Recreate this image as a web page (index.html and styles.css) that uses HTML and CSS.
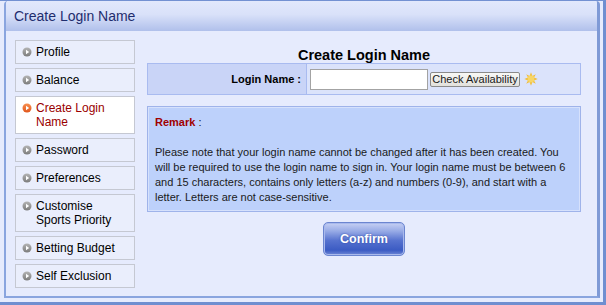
FILE: index.html
```html
<!DOCTYPE html>
<html lang="en">
<head>
    <meta charset="UTF-8">
    <title>Create Login Name</title>
    <link rel="stylesheet" href="styles.css">
</head>
<body>
    <svg class="defs" width="0" height="0">
        <defs>
            <linearGradient id="dotGrey" x1="0" y1="0" x2="0" y2="1">
                <stop offset="0" stop-color="#b4b4b4"/>
                <stop offset="1" stop-color="#7c7c7c"/>
            </linearGradient>
            <linearGradient id="dotOrange" x1="0" y1="0" x2="0" y2="1">
                <stop offset="0" stop-color="#f79050"/>
                <stop offset="1" stop-color="#e0561c"/>
            </linearGradient>
        </defs>
    </svg>
    <div class="frame">
        <div class="panel">
            <div class="panel-head">Create Login Name</div>
            <div class="panel-body">
                <ul class="menu">
                    <li><svg class="bullet" viewBox="0 0 10 10"><circle cx="5" cy="5" r="4.5" fill="url(#dotGrey)"/><path d="M4 2.8 L7.2 5 L4 7.2Z" fill="#fff"/></svg><span>Profile</span></li>
                    <li><svg class="bullet" viewBox="0 0 10 10"><circle cx="5" cy="5" r="4.5" fill="url(#dotGrey)"/><path d="M4 2.8 L7.2 5 L4 7.2Z" fill="#fff"/></svg><span>Balance</span></li>
                    <li class="active"><svg class="bullet" viewBox="0 0 10 10"><circle cx="5" cy="5" r="4.5" fill="url(#dotOrange)"/><path d="M4 2.8 L7.2 5 L4 7.2Z" fill="#fff"/></svg><span>Create Login Name</span></li>
                    <li><svg class="bullet" viewBox="0 0 10 10"><circle cx="5" cy="5" r="4.5" fill="url(#dotGrey)"/><path d="M4 2.8 L7.2 5 L4 7.2Z" fill="#fff"/></svg><span>Password</span></li>
                    <li><svg class="bullet" viewBox="0 0 10 10"><circle cx="5" cy="5" r="4.5" fill="url(#dotGrey)"/><path d="M4 2.8 L7.2 5 L4 7.2Z" fill="#fff"/></svg><span>Preferences</span></li>
                    <li><svg class="bullet" viewBox="0 0 10 10"><circle cx="5" cy="5" r="4.5" fill="url(#dotGrey)"/><path d="M4 2.8 L7.2 5 L4 7.2Z" fill="#fff"/></svg><span>Customise Sports Priority</span></li>
                    <li><svg class="bullet" viewBox="0 0 10 10"><circle cx="5" cy="5" r="4.5" fill="url(#dotGrey)"/><path d="M4 2.8 L7.2 5 L4 7.2Z" fill="#fff"/></svg><span>Betting Budget</span></li>
                    <li><svg class="bullet" viewBox="0 0 10 10"><circle cx="5" cy="5" r="4.5" fill="url(#dotGrey)"/><path d="M4 2.8 L7.2 5 L4 7.2Z" fill="#fff"/></svg><span>Self Exclusion</span></li>
                </ul>

                <div class="content">
                    <h2>Create Login Name</h2>
                    <div class="form-row">
                        <label class="form-label" for="loginName">Login Name :</label>
                        <div class="form-field">
                            <input type="text" id="loginName">
                            <button type="button" class="check-btn">Check Availability</button>
                            <svg class="star" viewBox="0 0 14 14">
                                <path d="M7 0.3 L8.4 4 L11.8 2.2 L10 5.6 L13.7 7 L10 8.4 L11.8 11.8 L8.4 10 L7 13.7 L5.6 10 L2.2 11.8 L4 8.4 L0.3 7 L4 5.6 L2.2 2.2 L5.6 4Z" fill="#f2bd36"/>
                                <circle cx="7" cy="7" r="3.4" fill="#f7d667"/>
                            </svg>
                        </div>
                    </div>

                    <div class="remark">
                        <span class="remark-title">Remark</span> :<br><br>
                        Please note that your login name cannot be changed after it has been created. You<br>
                        will be required to use the login name to sign in. Your login name must be between 6<br>
                        and 15 characters, contains only letters (a-z) and numbers (0-9), and start with a<br>
                        letter. Letters are not case-sensitive.
                    </div>

                    <div class="actions">
                        <button type="button" class="confirm">Confirm</button>
                    </div>
                </div>
            </div>
        </div>
    </div>
</body>
</html>
```

FILE: styles.css
```css
body {
    margin: 0;
    font-family: "Liberation Sans", Arial, sans-serif;
    background-color: #fff;
}
.defs {
    position: absolute;
}
.frame {
    width: 606px;
    height: 305px;
    box-sizing: border-box;
    border-top: 1px solid #7391d2;
    border-right: 3px solid #6f8ed0;
    border-bottom: 3px solid #6f8ed0;
    padding: 0 3px 0 4px;
    background-color: #e6ebfd;
}
.panel {
    height: 297px;
    box-sizing: border-box;
    border-left: 2px solid #8aa5df;
    border-right: 3px solid #7f9ad6;
    border-bottom: 2px solid #8aa5df;
    border-radius: 4px 4px 0 0;
    overflow: hidden;
}
.panel-head {
    height: 30px;
    line-height: 30px;
    padding-left: 8px;
    font-size: 14px;
    color: #1f2d6e;
    background: linear-gradient(to bottom, #e2e8fc 0%, #d9e1f9 45%, #b0c0eb 100%);
}
.panel-body {
    display: flex;
    gap: 12px;
    padding: 9px 0 0 9px;
}
.menu {
    list-style: none;
    margin: 0;
    padding: 0;
    width: 120px;
    display: flex;
    flex-direction: column;
    gap: 4px;
}
.menu li {
    display: flex;
    align-items: flex-start;
    gap: 4px;
    padding: 4px 6px;
    border: 1px solid #c5c8d2;
    background-color: #eaeefc;
    font-size: 12px;
    line-height: 14px;
    color: #000;
}
.menu li.active {
    background-color: #fff;
    color: #9a0000;
}
.bullet {
    flex: none;
    width: 10px;
    height: 10px;
    margin-top: 2px;
}
.content {
    width: 434px;
}
.content h2 {
    margin: 0;
    padding-top: 7px;
    font-size: 14.5px;
    line-height: 16px;
    text-align: center;
    color: #000;
}
.form-row {
    display: flex;
    height: 32px;
    box-sizing: border-box;
    border: 1px solid #a9bbf0;
    background-color: #dbe3fb;
}
.form-label {
    width: 159px;
    box-sizing: border-box;
    border-right: 1px solid #a9bbf0;
    padding-right: 5px;
    background-color: #c9d4f7;
    text-align: right;
    font-size: 11px;
    font-weight: bold;
    line-height: 30px;
    color: #000;
}
.form-field {
    display: flex;
    align-items: center;
    padding-left: 3px;
}
.form-field input {
    width: 118px;
    height: 21px;
    box-sizing: border-box;
    margin: 0;
    border: 1px solid #a3a3a3;
    background-color: #fff;
}
.check-btn {
    margin-left: 2px;
    width: 90px;
    height: 15px;
    padding: 0;
    border: 1px solid #8a8a8a;
    border-radius: 2px;
    background: linear-gradient(to bottom, #f8f8f6, #e2e1dc);
    font-family: "Liberation Sans", Arial, sans-serif;
    font-size: 11px;
    line-height: 13px;
    color: #1a1a1a;
}
.star {
    margin-left: 4px;
    width: 14px;
    height: 14px;
}
.remark {
    margin-top: 11px;
    height: 106px;
    box-sizing: border-box;
    padding: 8px 6px 6px 7px;
    border: 1px solid #9fb3ea;
    box-shadow: inset 0 0 0 1px #d6e1fc;
    background-color: #bdd1fb;
    font-size: 11px;
    line-height: 15px;
    color: #1a1a1a;
    white-space: nowrap;
}
.remark-title {
    font-weight: bold;
    color: #a00000;
}
.actions {
    padding-top: 10px;
    text-align: center;
}
.confirm {
    width: 82px;
    height: 34px;
    border: 1px solid #6b85d0;
    border-radius: 5px;
    box-shadow: inset 0 0 0 1px #a9b9ec;
    background: linear-gradient(to bottom, #c6d0f3 0%, #98abe6 25%, #5672cf 55%, #3b5bc3 85%, #6f88d6 100%);
    font-family: "Liberation Sans", Arial, sans-serif;
    font-size: 12.5px;
    font-weight: bold;
    color: #fff;
    text-shadow: 0 0 2px #2b48a8;
    cursor: pointer;
}
```
